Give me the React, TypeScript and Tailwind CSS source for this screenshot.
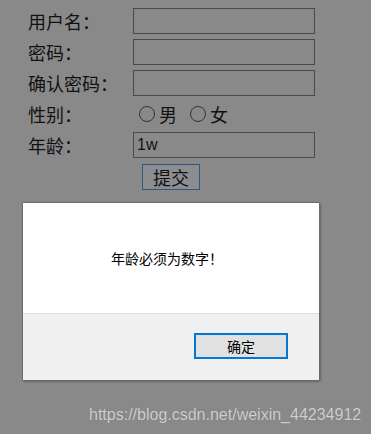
import React from "react";

const cjk = { fontFamily: '"Noto Sans CJK SC", "Microsoft YaHei", sans-serif' };

function Row({ label, children }: { label: string; children: React.ReactNode }) {
  return (
    <div className="flex h-[26px] items-center">
      <div className="w-[105px] text-[18px] leading-none text-[#111]" style={cjk}>
        {label}
      </div>
      {children}
    </div>
  );
}

function Input({ value }: { value?: string }) {
  return (
    <div className="flex h-[26px] w-[182px] items-center border border-[#4a4a4a] pl-[3px] text-[16px] text-[#111]" style={{ fontFamily: '"Liberation Sans", Arial, sans-serif' }}>
      {value}
    </div>
  );
}

function Radio({ label }: { label: string }) {
  return (
    <div className="flex items-center">
      <span className="h-[16px] w-[16px] rounded-full border border-[#333]" />
      <span className="ml-[4px] text-[18px] leading-none text-[#111]" style={cjk}>
        {label}
      </span>
    </div>
  );
}

export default function App() {
  return (
    <div className="flex h-[434px] w-[371px] flex-col bg-[#898989] pl-[28px] pt-[8px]">
      <div className="flex flex-col gap-[5px]">
        <Row label="用户名：">
          <Input />
        </Row>
        <Row label="密码：">
          <Input />
        </Row>
        <Row label="确认密码：">
          <Input />
        </Row>
        <Row label="性别：">
          <div className="ml-[6px] flex gap-[13px]">
            <Radio label="男" />
            <Radio label="女" />
          </div>
        </Row>
        <Row label="年龄：">
          <Input value="1w" />
        </Row>
      </div>
      <div className="ml-[114px] mt-[6px] flex h-[26px] w-[58px] items-center justify-center border border-[#2e5a80] bg-[#8b8d90] text-[18px] leading-none text-[#111]" style={cjk}>
        提交
      </div>
      <div className="-ml-[6px] mt-[12px] flex h-[179px] w-[298px] flex-col rounded-[2px] border border-[#6a6a6a] shadow-[1px_1px_2px_rgba(0,0,0,0.25)]">
        <div className="flex h-[110px] items-center bg-white pl-[88px] text-[14px] text-black" style={cjk}>
          年龄必须为数字！
        </div>
        <div className="flex flex-1 justify-end border-t border-[#dfdfdf] bg-[#f0f0f0] pr-[31px] pt-[19px]">
          <div className="flex h-[26px] w-[94px] items-center justify-center border-2 border-[#0078d7] bg-[#e1e1e1] text-[14px] text-black" style={cjk}>
            确定
          </div>
        </div>
      </div>
      <div className="ml-[61px] mt-[26px] text-[16px] leading-none text-[#cfcfcf] [text-shadow:0_0_1px_rgba(0,0,0,0.2)]" style={{ fontFamily: '"Liberation Sans", Arial, sans-serif' }}>
        https://blog.csdn.net/weixin_44234912
      </div>
    </div>
  );
}
